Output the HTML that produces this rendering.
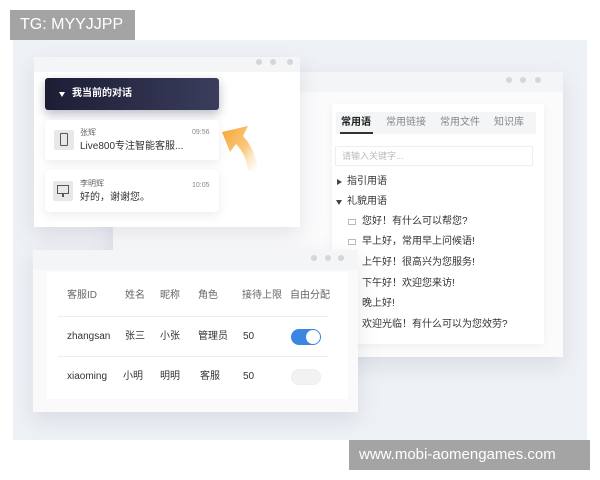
<!DOCTYPE html>
<html><head><meta charset="utf-8"><style>
*{margin:0;padding:0;box-sizing:border-box}
body{width:600px;height:480px;background:#fff;position:relative;overflow:hidden;font-family:"Liberation Sans","Noto Sans CJK SC",sans-serif;color:#333}
.a{position:absolute}
.bg{left:13px;top:40px;width:574px;height:400px;background:#eef1f5}
.win{background:#f4f5f7;box-shadow:0 8px 20px rgba(120,130,150,.18)}
.body{background:#fff}
.dot{position:absolute;width:6px;height:6px;border-radius:3px;background:#d4d6da}
.t{position:absolute;font-size:10px;line-height:12px;height:12px;white-space:nowrap}
.card{background:#fff;box-shadow:0 3px 10px rgba(0,0,0,.08);border-radius:3px}
.ic{position:absolute;width:20px;height:20px;background:#e8e8ea;border-radius:2px}
.tri{position:absolute;width:0;height:0}
</style></head><body>
<div class="a bg"></div>
<div class="a" style="left:10px;top:10px;width:125px;height:30px;background:#a4a4a4;color:#fff;font-size:16px;line-height:30px;padding-left:10px">TG: MYYJJPP</div>

<!-- window 2 -->
<div class="a win" style="left:113px;top:72px;width:450px;height:285px"></div>
<div class="a body" style="left:113px;top:92px;width:450px;height:265px;background:#fbfbfc"></div>
<div class="dot" style="left:506px;top:77px"></div><div class="dot" style="left:520px;top:77px"></div><div class="dot" style="left:535px;top:77px"></div>
<div class="a" style="left:332px;top:104px;width:212px;height:240px;background:#fff;box-shadow:0 2px 8px rgba(0,0,0,.05)"></div>
<div class="a" style="left:336px;top:112px;width:200px;height:22px;background:#f4f5f7"></div>
<div class="t" style="left:341px;top:117px;font-weight:bold;color:#222">常用语</div>
<div class="a" style="left:340px;top:132px;width:33px;height:2px;background:#333"></div>
<div class="t" style="left:386px;top:117px;color:#888">常用链接</div>
<div class="t" style="left:440px;top:117px;color:#888">常用文件</div>
<div class="t" style="left:494px;top:117px;color:#888">知识库</div>
<div class="a" style="left:335px;top:146px;width:198px;height:20px;border:1px solid #eee"></div>
<div class="t" style="left:342px;top:150px;color:#bbb;font-size:9px">请输入关键字...</div>
<div class="tri" style="left:337px;top:179px;border-left:5px solid #444;border-top:3px solid transparent;border-bottom:3px solid transparent"></div>
<div class="t" style="left:347px;top:176px">指引用语</div>
<div class="tri" style="left:336px;top:200px;border-top:5px solid #444;border-left:3px solid transparent;border-right:3px solid transparent"></div>
<div class="t" style="left:347px;top:196px">礼貌用语</div>
<div class="a" style="left:348px;top:219px;width:8px;height:6px;border:1px solid #bbb"></div>
<div class="t" style="left:362px;top:216px">您好！有什么可以帮您?</div>
<div class="a" style="left:348px;top:239px;width:8px;height:6px;border:1px solid #bbb"></div>
<div class="t" style="left:362px;top:236px">早上好，常用早上问候语!</div>
<div class="t" style="left:362px;top:257px">上午好！很高兴为您服务!</div>
<div class="t" style="left:362px;top:278px">下午好！欢迎您来访!</div>
<div class="t" style="left:362px;top:298px">晚上好!</div>
<div class="t" style="left:362px;top:319px">欢迎光临！有什么可以为您效劳?</div>

<!-- window 1 -->
<div class="a win" style="left:34px;top:57px;width:266px;height:170px"></div>
<div class="a body" style="left:34px;top:72px;width:266px;height:155px"></div>
<div class="dot" style="left:256px;top:59px"></div><div class="dot" style="left:270px;top:59px"></div><div class="dot" style="left:287px;top:59px"></div>
<div class="a" style="left:45px;top:78px;width:174px;height:32px;border-radius:3px;background:linear-gradient(90deg,#1c1d35,#3a3d5c);box-shadow:0 4px 10px rgba(30,30,60,.3)"></div>
<div class="tri" style="left:59px;top:92px;border-top:5px solid #fff;border-left:3.5px solid transparent;border-right:3.5px solid transparent"></div>
<div class="t" style="left:72px;top:88px;color:#fff;font-weight:bold">我当前的对话</div>
<div class="a card" style="left:45px;top:120px;width:174px;height:40px"></div>
<div class="ic" style="left:54px;top:130px"></div>
<div class="a" style="left:60px;top:133px;width:8px;height:13px;border:1.5px solid #555;border-radius:1px"></div>
<div class="t" style="left:80px;top:127px;font-size:8px;color:#666">张辉</div>
<div class="t" style="left:192px;top:127px;font-size:7px;color:#888">09:56</div>
<div class="t" style="left:80px;top:141px">Live800专注智能客服...</div>
<div class="a card" style="left:45px;top:170px;width:174px;height:42px"></div>
<div class="ic" style="left:53px;top:181px"></div>
<div class="a" style="left:57px;top:185px;width:12px;height:9px;border:1.5px solid #555"></div>
<div class="a" style="left:62px;top:194px;width:2px;height:3px;background:#555"></div>
<div class="t" style="left:80px;top:178px;font-size:8px;color:#666">李明辉</div>
<div class="t" style="left:192px;top:180px;font-size:7px;color:#888">10:05</div>
<div class="t" style="left:80px;top:192px">好的，谢谢您。</div>
<svg class="a" style="left:218px;top:122px" width="50" height="60" viewBox="0 0 50 60">
<defs><linearGradient id="g" x1="0" y1="0" x2="1" y2="1"><stop offset="0" stop-color="#f7a531"/><stop offset=".55" stop-color="#f9b85a" stop-opacity=".8"/><stop offset="1" stop-color="#fde3bd" stop-opacity="0"/></linearGradient></defs>
<path d="M4 10 L30 4 L25 14 Q38 28 40 50 L30 48 Q28 32 18 22 L12 30 Z" fill="url(#g)"/>
</svg>

<!-- window 3 -->
<div class="a win" style="left:33px;top:250px;width:325px;height:162px"></div>
<div class="a body" style="left:33px;top:270px;width:325px;height:142px;background:#fafafb"></div>
<div class="dot" style="left:311px;top:255px"></div><div class="dot" style="left:325px;top:255px"></div><div class="dot" style="left:338px;top:255px"></div>
<div class="a" style="left:47px;top:272px;width:301px;height:127px;background:#fff"></div>
<div class="t" style="left:67px;top:290px;color:#666">客服ID</div>
<div class="t" style="left:125px;top:290px;color:#666">姓名</div>
<div class="t" style="left:160px;top:290px;color:#666">昵称</div>
<div class="t" style="left:198px;top:290px;color:#666">角色</div>
<div class="t" style="left:242px;top:290px;color:#666">接待上限</div>
<div class="t" style="left:290px;top:290px;color:#666">自由分配</div>
<div class="a" style="left:58px;top:316px;width:270px;height:1px;background:#eee"></div>
<div class="t" style="left:67px;top:331px">zhangsan</div>
<div class="t" style="left:125px;top:331px">张三</div>
<div class="t" style="left:160px;top:331px">小张</div>
<div class="t" style="left:198px;top:331px">管理员</div>
<div class="t" style="left:243px;top:331px">50</div>
<div class="a" style="left:291px;top:329px;width:30px;height:16px;border-radius:8px;background:#3a86e0"></div>
<div class="a" style="left:306px;top:330px;width:14px;height:14px;border-radius:7px;background:#fff"></div>
<div class="a" style="left:58px;top:356px;width:270px;height:1px;background:#eee"></div>
<div class="t" style="left:67px;top:371px">xiaoming</div>
<div class="t" style="left:123px;top:371px">小明</div>
<div class="t" style="left:160px;top:371px">明明</div>
<div class="t" style="left:200px;top:371px">客服</div>
<div class="t" style="left:243px;top:371px">50</div>
<div class="a" style="left:291px;top:369px;width:30px;height:16px;border-radius:8px;background:#f2f2f3;border:1px solid #eee"></div>

<div class="a" style="left:349px;top:440px;width:241px;height:30px;background:#a4a4a4;color:#fff;font-size:15px;line-height:30px;padding-left:10px">www.mobi-aomengames.com</div>
</body></html>
